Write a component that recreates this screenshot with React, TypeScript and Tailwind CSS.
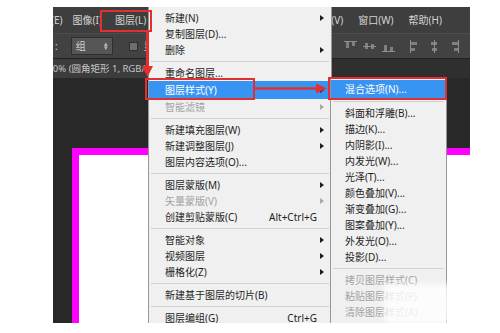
type Row = { label: string; shortcut?: string; sub?: boolean; disabled?: boolean; active?: boolean } | 'sep';

const layerMenu: Row[] = [
  { label: '新建(N)', sub: true },
  { label: '复制图层(D)...' },
  { label: '删除', sub: true },
  'sep',
  { label: '重命名图层...' },
  { label: '图层样式(Y)', sub: true, active: true },
  { label: '智能滤镜', sub: true, disabled: true },
  'sep',
  { label: '新建填充图层(W)', sub: true },
  { label: '新建调整图层(J)', sub: true },
  { label: '图层内容选项(O)...' },
  'sep',
  { label: '图层蒙版(M)', sub: true },
  { label: '矢量蒙版(V)', sub: true, disabled: true },
  { label: '创建剪贴蒙版(C)', shortcut: 'Alt+Ctrl+G' },
  'sep',
  { label: '智能对象', sub: true },
  { label: '视频图层', sub: true },
  { label: '栅格化(Z)', sub: true },
  'sep',
  { label: '新建基于图层的切片(B)' },
  'sep',
  { label: '图层编组(G)', shortcut: 'Ctrl+G' },
];

const styleMenu: Row[] = [
  { label: '混合选项(N)...', active: true },
  'sep',
  { label: '斜面和浮雕(B)...' },
  { label: '描边(K)...' },
  { label: '内阴影(I)...' },
  { label: '内发光(W)...' },
  { label: '光泽(T)...' },
  { label: '颜色叠加(V)...' },
  { label: '渐变叠加(G)...' },
  { label: '图案叠加(Y)...' },
  { label: '外发光(O)...' },
  { label: '投影(D)...' },
  'sep',
  { label: '拷贝图层样式(C)', disabled: true },
  { label: '粘贴图层样式(P)', disabled: true },
  { label: '清除图层样式(A)', disabled: true },
];

function MenuList({ rows, indent }: { rows: Row[]; indent: string }) {
  return (
    <>
      {rows.map((r, i) => {
        if (r === 'sep') {
          return (
            <div key={i} className="h-[7px] flex items-center px-[2px]">
              <div className="h-px w-full bg-[#d2d2d2]" />
            </div>
          );
        }
        const color = r.active ? 'text-white' : r.disabled ? 'text-[#a2a2a2]' : 'text-[#1e1e1e]';
        return (
          <div
            key={i}
            className={`flex items-center ${indent} ${r.active ? 'h-[18px] bg-[#3894f3]' : 'h-4'} ${r.shortcut ? 'pr-[14px]' : 'pr-[7px]'} ${color}`}
          >
            <span className="whitespace-nowrap">{r.label}</span>
            {r.shortcut && <span className="ml-auto whitespace-nowrap">{r.shortcut}</span>}
            {r.sub && (
              <span
                className={`ml-auto w-0 h-0 border-y-[3px] border-y-transparent border-l-[4px] ${r.disabled ? 'border-l-[#a8a8a8]' : 'border-l-[#1e1e1e]'}`}
              />
            )}
          </div>
        );
      })}
    </>
  );
}

function AlignIcon({ kind }: { kind: number }) {
  const s = '#8e8e8e';
  return (
    <svg width="13" height="13" viewBox="0 0 13 13" fill="none">
      {kind < 3 ? (
        <>
          <line x1="0" x2="13" y1={[1.5, 6.5, 11.5][kind]} y2={[1.5, 6.5, 11.5][kind]} stroke={s} />
          <rect x="2" y={[2, 3, 5][kind]} width="3" height="6" fill={s} opacity="0.8" />
          <rect x="8" y={[2, 4, 7][kind]} width="3" height={kind === 1 ? 5 : 4} fill={s} opacity="0.8" />
        </>
      ) : (
        <>
          <line y1="0" y2="13" x1={[1.5, 6.5, 11.5][kind - 3]} x2={[1.5, 6.5, 11.5][kind - 3]} stroke={s} />
          <rect y="2" x={[2, 3, 5][kind - 3]} height="3" width="6" fill={s} opacity="0.8" />
          <rect y="8" x={[2, 4, 7][kind - 3]} height="3" width={kind === 4 ? 5 : 4} fill={s} opacity="0.8" />
        </>
      )}
    </svg>
  );
}

export default function App() {
  return (
    <div className="relative w-[500px] h-[333px] overflow-hidden bg-white font-['Noto_Sans','Noto_Sans_CJK_SC',sans-serif] text-[10px] leading-none">
      <div className="pl-[53px] pt-[7px]">
        <div className="w-[417px] h-[316px] bg-[#282828] flex flex-col overflow-hidden">
          {/* menu bar */}
          <div className="h-[26px] shrink-0 bg-[#3e3e3e] flex items-center text-[#d4d4d4] pr-[28px]">
            <span className="-ml-[22px] whitespace-nowrap">编辑(E)</span>
            <span className="ml-[10px] whitespace-nowrap">图像(I)</span>
            <span className="ml-[13px] whitespace-nowrap">图层(L)</span>
            <div className="ml-auto flex gap-[15px]">
              <span className="whitespace-nowrap">视图(V)</span>
              <span className="whitespace-nowrap">窗口(W)</span>
              <span className="whitespace-nowrap">帮助(H)</span>
            </div>
          </div>
          {/* options bar */}
          <div className="h-[25px] shrink-0 bg-[#424242] border-t border-[#4d4d4d] flex items-center text-[#cfcfcf] pr-[10px]">
            <span className="ml-[2px]">:</span>
            <div className="ml-[13px] w-[42px] h-[18px] bg-[#565656] border border-[#2e2e2e] flex items-center justify-between px-[4px]">
              <span>组</span>
              <span className="text-[7px] text-[#bcbcbc] leading-[4px] flex flex-col items-center">
                <span>▴</span>
                <span>▾</span>
              </span>
            </div>
            <div className="ml-[16px] w-[9px] h-[9px] bg-[#6e6e6e] border border-[#2e2e2e]" />
            <span className="ml-[6px] whitespace-nowrap">显示变换控件</span>
            <div className="ml-auto flex gap-[6px] items-center">
              {[0, 1, 2, 3, 4, 5].map((k) => (
                <div key={k} className={k === 3 ? 'ml-[8px]' : ''}>
                  <AlignIcon kind={k} />
                </div>
              ))}
            </div>
          </div>
          {/* doc tab */}
          <div className="h-[20px] shrink-0 bg-[#2f2f2f] border-t border-[#222] flex">
            <div className="bg-[#3c3c3c] flex items-center pr-[12px] text-[#c6c6c6] text-[9.5px]">
              <span className="-ml-[11px] whitespace-nowrap">100% (圆角矩形 1, RGB/8) *</span>
            </div>
          </div>
          {/* canvas */}
          <div className="flex-1 flex pl-[19px] pt-[70px] bg-[#282828]">
            <div className="flex-1 bg-white border-l-[7px] border-t-[7px] border-[#ff00ff]" />
          </div>
        </div>
      </div>

      {/* layer menu */}
      <div className="absolute left-[148px] top-[7px] w-[184px] h-[316px] bg-[#f0f0f0] border-l border-r border-[#979797] pt-[3px] overflow-hidden">
        <MenuList rows={layerMenu} indent="pl-[16px]" />
      </div>

      {/* layer style submenu */}
      <div className="absolute left-[330px] top-[78px] w-[117px] h-[245px] bg-[#f0f0f0] border-x border-[#979797] pt-[2px] overflow-hidden">
        <MenuList rows={styleMenu} indent="pl-[14px]" />
      </div>

      {/* watermark blur */}
      <div className="absolute left-[384px] top-[284px] w-[70px] h-[40px] bg-white/80 blur-[3px] rounded" />

      {/* highlight boxes */}
      <div className="absolute left-[100px] top-[10px] w-[52px] h-[22px] border-2 border-[#e3302e]" />
      <div className="absolute left-[145px] top-[78px] w-[110px] h-[22px] border-2 border-[#e3302e]" />
      <div className="absolute left-[328px] top-[77px] w-[119px] h-[23px] border-2 border-[#e3302e]" />

      {/* arrows */}
      <svg className="absolute inset-0 pointer-events-none" width="500" height="333">
        <line x1="147.5" y1="32" x2="147.5" y2="68" stroke="#e3302e" strokeWidth="3" />
        <polygon points="142,66 153,66 147.5,77" fill="#e3302e" />
        <line x1="255" y1="88.5" x2="318" y2="88.5" stroke="#e3302e" strokeWidth="2.5" />
        <polygon points="316,83.5 316,93.5 327,88.5" fill="#e3302e" />
      </svg>
    </div>
  );
}
